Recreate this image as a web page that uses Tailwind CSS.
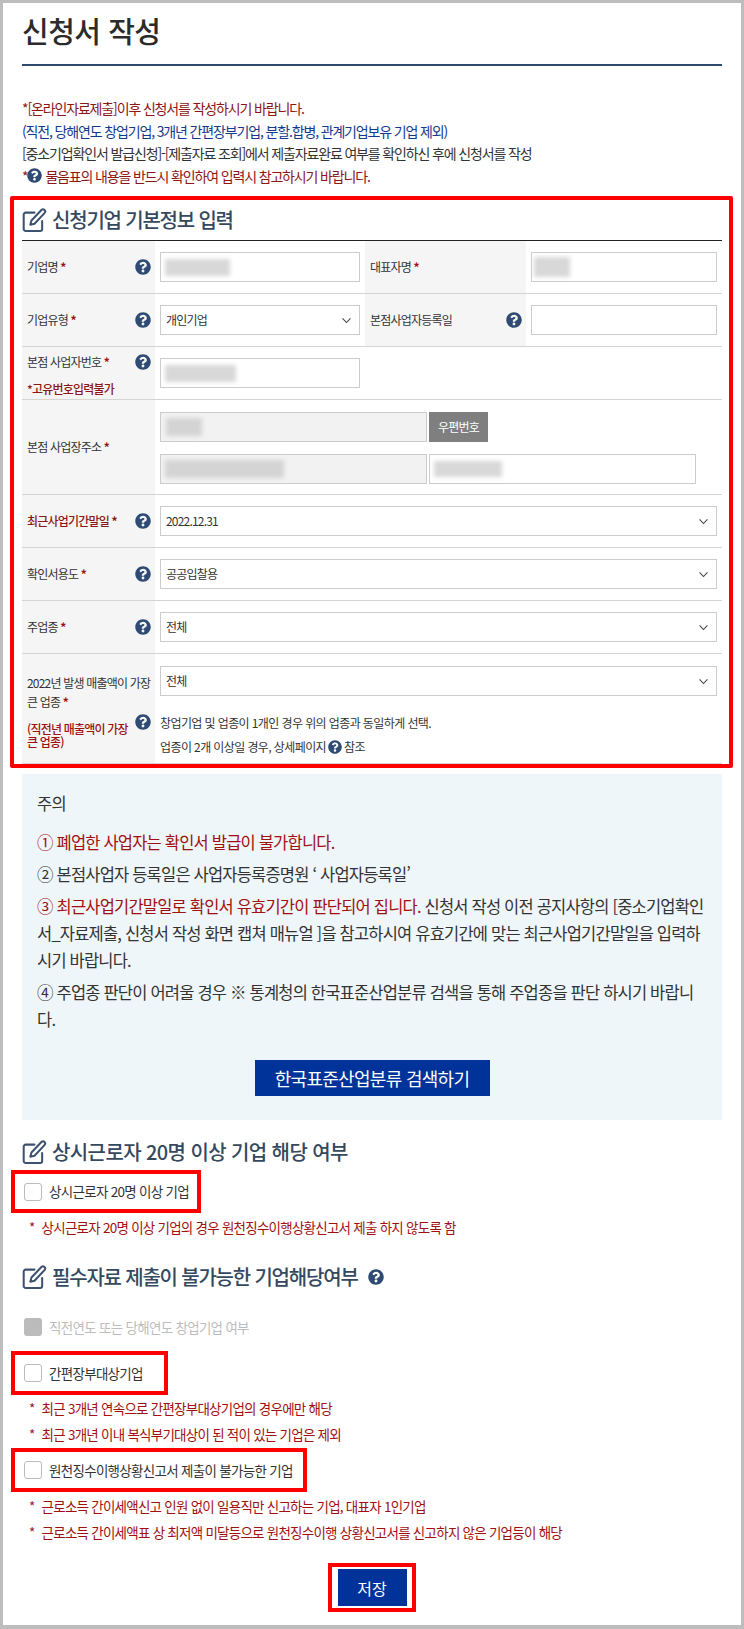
<!DOCTYPE html>
<html lang="ko">
  <head>
    <meta charset="UTF-8" />
    <meta name="viewport" content="width=device-width, initial-scale=1.0" />
    <title>신청서 작성</title>
    <script src="https://cdn.jsdelivr.net/npm/@tailwindcss/browser@4"></script>
  </head>
  <body class="bg-white font-['Noto_Sans_CJK_KR',sans-serif] text-[#333]">
    <svg class="absolute w-0 h-0">
      <symbol id="q" viewBox="0 0 512 512"><path fill="#2f4b73" d="M504 256c0 136.997-111.043 248-248 248S8 392.997 8 256C8 119.083 119.043 8 256 8s248 111.083 248 248zM262.655 90c-54.497 0-89.255 22.957-116.549 63.758-3.536 5.286-2.353 12.415 2.715 16.258l34.699 26.31c5.205 3.947 12.621 3.008 16.665-2.122 17.864-22.658 30.113-35.797 57.303-35.797 20.429 0 45.698 13.148 45.698 32.958 0 14.976-12.363 22.667-32.534 33.976C247.128 238.528 216 254.941 216 296v4c0 6.627 5.373 12 12 12h56c6.627 0 12-5.373 12-12v-1.333c0-28.462 83.186-29.647 83.186-106.667 0-58.002-60.165-102-116.531-102zM256 338c-25.365 0-46 20.635-46 46 0 25.364 20.635 46 46 46s46-20.636 46-46c0-25.365-20.635-46-46-46z"/></symbol>
      <symbol id="edit" viewBox="0 0 26 26"><g fill="none" stroke="#3d5270" stroke-width="2.2" stroke-linejoin="round" stroke-linecap="round"><path d="M13 5H3.5A2.2 2.2 0 0 0 1.3 7.2v15.5a2.2 2.2 0 0 0 2.2 2.2h15.6a2.2 2.2 0 0 0 2.2-2.2V14"/><path d="M20.5 2.2a2.3 2.3 0 0 1 3.3 3.3L13 17l-4.5 1.2L9.7 13.500z"/></g></symbol>
      <symbol id="down" viewBox="0 0 12 8"><path d="M1.500 1.500 6 6.300l4.500-4.800" fill="none" stroke="#444" stroke-width="1.200"/></symbol>
    </svg>

    <div class="w-[744px] h-[1629px] border-x-[3px] border-t-[3px] border-b-[4px] border-[#bdbdbd] px-[19px] overflow-hidden">
      <h1 class="h-[63px] border-b-2 border-[#2f4b6b] flex items-center pb-[6px] text-[29px] tracking-[-0.5px] font-medium text-[#2b2b2b]">신청서 작성</h1>

      <!-- Intro -->
      <div class="mt-[31px] text-[14px] leading-[22.500px] tracking-[-1.15px]">
        <p class="text-[#8c1515]">*[온라인자료제출]이후 신청서를 작성하시기 바랍니다.</p>
        <p class="text-[#123a8c]">(직전, 당해연도 창업기업, 3개년 간편장부기업, 분할.합병, 관계기업보유 기업 제외)</p>
        <p>[중소기업확인서 발급신청]-[제출자료 조회]에서 제출자료완료 여부를 확인하신 후에 신청서를 작성</p>
        <p class="text-[#8c1515] flex items-center">*<svg class="w-[15px] h-[15px] mr-[3px]"><use href="#q" /></svg>물음표의 내용을 반드시 확인하여 입력시 참고하시기 바랍니다.</p>
      </div>

      <!-- Basic info -->
      <section class="mt-[9px] -ml-[12px] -mr-[11px] h-[572px] border-4 border-[#ff0000] pl-[8px] pr-[7px] rounded-[2px]">
        <h2 class="h-[40px] flex items-center gap-[5px] text-[20px] font-medium tracking-[-1.2px] text-[#34495e]">
          <svg class="w-[25px] h-[24px] shrink-0"><use href="#edit" /></svg>신청기업 기본정보 입력
        </h2>
        <div class="border-t border-[#222] text-[12px] tracking-[-0.8px]">
          <div class="grid grid-cols-[133px_210px_161px_196px] h-[53px] border-b border-[#d4d4d4]">
            <div class="bg-[#f5f5f5] flex items-center justify-between pl-[5px] pr-[4px]"><span>기업명 <b class="text-[#a01010]">*</b></span><svg class="w-[16px] h-[16px]"><use href="#q" /></svg></div>
            <div class="flex items-center px-[5px]"><div class="w-full h-[30px] border border-[#ccc] flex items-center pl-[4px]"><div class="w-[65px] h-[17px] bg-[#d8d8d8] blur-[2px]"></div></div></div>
            <div class="bg-[#f5f5f5] flex items-center pl-[5px]"><span>대표자명 <b class="text-[#a01010]">*</b></span></div>
            <div class="flex items-center px-[5px]"><div class="w-full h-[30px] border border-[#ccc] flex items-center pl-[2px]"><div class="w-[36px] h-[20px] bg-[#d8d8d8] blur-[2px]"></div></div></div>
          </div>
          <div class="grid grid-cols-[133px_210px_161px_196px] h-[53px] border-b border-[#d4d4d4]">
            <div class="bg-[#f5f5f5] flex items-center justify-between pl-[5px] pr-[4px]"><span>기업유형 <b class="text-[#a01010]">*</b></span><svg class="w-[16px] h-[16px]"><use href="#q" /></svg></div>
            <div class="flex items-center px-[5px]"><div class="w-full h-[30px] border border-[#ccc] flex items-center justify-between pl-[5px] pr-[7px]"><span>개인기업</span><svg class="w-[11px] h-[7px]"><use href="#down" /></svg></div></div>
            <div class="bg-[#f5f5f5] flex items-center justify-between pl-[5px] pr-[4px]"><span>본점사업자등록일</span><svg class="w-[16px] h-[16px]"><use href="#q" /></svg></div>
            <div class="flex items-center px-[5px]"><div class="w-full h-[30px] border border-[#ccc]"></div></div>
          </div>
          <div class="grid grid-cols-[133px_210px_1fr] h-[53px] border-b border-[#d4d4d4]">
            <div class="bg-[#f5f5f5] pl-[5px] pr-[4px] pt-[6px]">
              <div class="flex items-center justify-between"><span>본점 사업자번호 <b class="text-[#a01010]">*</b></span><svg class="w-[16px] h-[16px]"><use href="#q" /></svg></div>
              <p class="mt-[9px] text-[#8c1515] font-medium">*고유번호입력불가</p>
            </div>
            <div class="flex items-center px-[5px]"><div class="w-full h-[30px] border border-[#ccc] flex items-center pl-[4px]"><div class="w-[71px] h-[17px] bg-[#d8d8d8] blur-[2px]"></div></div></div>
            <div></div>
          </div>
          <div class="grid grid-cols-[133px_1fr] h-[95px] border-b border-[#d4d4d4]">
            <div class="bg-[#f5f5f5] flex items-center pl-[5px]"><span>본점 사업장주소 <b class="text-[#a01010]">*</b></span></div>
            <div class="pl-[5px] pt-[12px] flex flex-col gap-[12px]">
              <div class="flex gap-[2px]">
                <div class="w-[267px] h-[30px] border border-[#ccc] bg-[#f2f2f2] flex items-center pl-[5px]"><div class="w-[36px] h-[18px] bg-[#d4d4d4] blur-[2px]"></div></div>
                <div class="w-[59px] h-[30px] bg-[#7f7f7f] text-white flex items-center justify-center">우편번호</div>
              </div>
              <div class="flex gap-[2px]">
                <div class="w-[267px] h-[30px] border border-[#ccc] bg-[#f2f2f2] flex items-center pl-[4px]"><div class="w-[119px] h-[18px] bg-[#d4d4d4] blur-[2px]"></div></div>
                <div class="w-[267px] h-[30px] border border-[#ccc] flex items-center pl-[4px]"><div class="w-[68px] h-[16px] bg-[#d8d8d8] blur-[2px]"></div></div>
              </div>
            </div>
          </div>
          <div class="grid grid-cols-[133px_1fr] h-[53px] border-b border-[#d4d4d4]">
            <div class="bg-[#f5f5f5] flex items-center justify-between pl-[5px] pr-[4px]"><span class="text-[#8c1515] font-medium">최근사업기간말일 <b>*</b></span><svg class="w-[16px] h-[16px]"><use href="#q" /></svg></div>
            <div class="flex items-center px-[5px]"><div class="w-full h-[30px] border border-[#ccc] flex items-center justify-between pl-[5px] pr-[7px]"><span>2022.12.31</span><svg class="w-[11px] h-[7px]"><use href="#down" /></svg></div></div>
          </div>
          <div class="grid grid-cols-[133px_1fr] h-[53px] border-b border-[#d4d4d4]">
            <div class="bg-[#f5f5f5] flex items-center justify-between pl-[5px] pr-[4px]"><span>확인서용도 <b class="text-[#a01010]">*</b></span><svg class="w-[16px] h-[16px]"><use href="#q" /></svg></div>
            <div class="flex items-center px-[5px]"><div class="w-full h-[30px] border border-[#ccc] flex items-center justify-between pl-[5px] pr-[7px]"><span>공공입찰용</span><svg class="w-[11px] h-[7px]"><use href="#down" /></svg></div></div>
          </div>
          <div class="grid grid-cols-[133px_1fr] h-[53px] border-b border-[#d4d4d4]">
            <div class="bg-[#f5f5f5] flex items-center justify-between pl-[5px] pr-[4px]"><span>주업종 <b class="text-[#a01010]">*</b></span><svg class="w-[16px] h-[16px]"><use href="#q" /></svg></div>
            <div class="flex items-center px-[5px]"><div class="w-full h-[30px] border border-[#ccc] flex items-center justify-between pl-[5px] pr-[7px]"><span>전체</span><svg class="w-[11px] h-[7px]"><use href="#down" /></svg></div></div>
          </div>
          <div class="grid grid-cols-[133px_1fr] h-[110px] border-b border-[#d4d4d4]">
            <div class="bg-[#f5f5f5] pl-[5px] pr-[4px] pt-[19px] relative">
              <p class="leading-[19px]">2022년 발생 매출액이 가장<br />큰 업종 <b class="text-[#a01010]">*</b></p>
              <p class="mt-[11px] w-[104px] leading-[13px] text-[#a01010] font-medium">(직전년 매출액이 가장 큰 업종)</p>
              <svg class="absolute right-[4px] top-[60px] w-[16px] h-[16px]"><use href="#q" /></svg>
            </div>
            <div class="pt-[12px] pl-[5px] tracking-[-0.6px]">
              <div class="mr-[5px] h-[30px] border border-[#ccc] flex items-center justify-between pl-[5px] pr-[7px] tracking-[-0.8px]"><span>전체</span><svg class="w-[11px] h-[7px]"><use href="#down" /></svg></div>
              <p class="mt-[15px] leading-[24px]">창업기업 및 업종이 1개인 경우 위의 업종과 동일하게 선택.</p>
              <p class="leading-[24px] flex items-center">업종이 2개 이상일 경우, 상세페이지<svg class="w-[14px] h-[14px] mx-[2px]"><use href="#q" /></svg>참조</p>
            </div>
          </div>
        </div>
      </section>

      <!-- Notice -->
      <div class="mt-[6px] h-[346px] bg-[#eef6fa] px-[15px] pt-[16px] text-[16.500px] tracking-[-0.8px] leading-[27px]">
        <p class="h-[27px]">주의</p>
        <p class="mt-[12px] text-[#a01010]">① 폐업한 사업자는 확인서 발급이 불가합니다.</p>
        <p class="mt-[5px]">② 본점사업자 등록일은 사업자등록증명원 ‘ 사업자등록일’</p>
        <p class="mt-[5px] whitespace-nowrap"><span class="text-[#a01010]">③ 최근사업기간말일로 확인서 유효기간이 판단되어 집니다.</span> 신청서 작성 이전 공지사항의 [중소기업확인<br />서_자료제출, 신청서 작성 화면 캡쳐 매뉴얼 ]을 참고하시여 유효기간에 맞는 최근사업기간말일을 입력하<br />시기 바랍니다.</p>
        <p class="mt-[5px] whitespace-nowrap">④ 주업종 판단이 어려울 경우 ※ 통계청의 한국표준산업분류 검색을 통해 주업종을 판단 하시기 바랍니<br />다.</p>
        <a class="mt-[27px] mx-auto w-[235px] h-[36px] bg-[#003399] text-white text-[18px] tracking-[-0.7px] flex items-center justify-center">한국표준산업분류 검색하기</a>
      </div>

      <!-- Employees -->
      <h2 class="mt-[20px] h-[24px] flex items-center gap-[5px] text-[20px] font-medium tracking-[-0.6px] text-[#34495e]">
        <svg class="w-[25px] h-[24px] shrink-0"><use href="#edit" /></svg>상시근로자 20명 이상 기업 해당 여부
      </h2>
      <label class="mt-[6px] -ml-[11px] w-[190px] h-[43px] border-4 border-[#ff0000] pl-[9px] flex items-center gap-[7px] text-[13.500px] tracking-[-0.7px]"><span class="w-[18px] h-[18px] rounded-[3px] border border-[#bbb] bg-white shrink-0"></span>상시근로자 20명 이상 기업</label>
      <p class="mt-[4px] h-[20px] pl-[7px] flex items-center gap-[7px] text-[13.500px] tracking-[-0.75px] text-[#a01010]"><span>*</span>상시근로자 20명 이상 기업의 경우 원천징수이행상황신고서 제출 하지 않도록 함</p>

      <!-- Required documents -->
      <h2 class="mt-[28px] h-[24px] flex items-center gap-[5px] text-[20px] font-medium tracking-[-1.2px] text-[#34495e]">
        <svg class="w-[25px] h-[24px] shrink-0"><use href="#edit" /></svg>필수자료 제출이 불가능한 기업해당여부
        <svg class="w-[16px] h-[16px] ml-[5px]"><use href="#q" /></svg>
      </h2>
      <label class="mt-[29px] ml-[2px] h-[18px] flex items-center gap-[7px] text-[13.500px] tracking-[-0.7px] text-[#bdbdbd]"><span class="w-[18px] h-[18px] rounded-[3px] bg-[#bbb] shrink-0"></span>직전연도 또는 당해연도 창업기업 여부</label>
      <label class="mt-[15px] -ml-[11px] w-[157px] h-[44px] border-4 border-[#ff0000] pl-[9px] flex items-center gap-[7px] text-[13.500px] tracking-[-0.7px]"><span class="w-[18px] h-[18px] rounded-[3px] border border-[#bbb] bg-white shrink-0"></span>간편장부대상기업</label>
      <p class="mt-[3px] h-[20px] pl-[7px] flex items-center gap-[7px] text-[13.500px] tracking-[-0.75px] text-[#a01010]"><span>*</span>최근 3개년 연속으로 간편장부대상기업의 경우에만 해당</p>
      <p class="mt-[6px] h-[20px] pl-[7px] flex items-center gap-[7px] text-[13.500px] tracking-[-0.75px] text-[#a01010]"><span>*</span>최근 3개년 이내 복식부기대상이 된 적이 있는 기업은 제외</p>
      <label class="mt-[4px] -ml-[11px] w-[296px] h-[44px] border-4 border-[#ff0000] pl-[9px] flex items-center gap-[7px] text-[13.500px] tracking-[-0.7px]"><span class="w-[18px] h-[18px] rounded-[3px] border border-[#bbb] bg-white shrink-0"></span>원천징수이행상황신고서 제출이 불가능한 기업</label>
      <p class="mt-[4px] h-[20px] pl-[7px] flex items-center gap-[7px] text-[13.500px] tracking-[-0.75px] text-[#a01010]"><span>*</span>근로소득 간이세액신고 인원 없이 일용직만 신고하는 기업, 대표자 1인기업</p>
      <p class="mt-[6px] h-[20px] pl-[7px] flex items-center gap-[7px] text-[13.500px] tracking-[-0.75px] text-[#a01010]"><span>*</span>근로소득 간이세액표 상 최저액 미달등으로 원천징수이행 상황신고서를 신고하지 않은 기업등이 해당</p>

      <div class="mt-[21px] mx-auto w-[88px] h-[49px] border-4 border-[#ff0000] flex items-center justify-center">
        <button class="w-[69px] h-[37px] bg-[#003399] text-white text-[16px]">저장</button>
      </div>
    </div>
  </body>
</html>
